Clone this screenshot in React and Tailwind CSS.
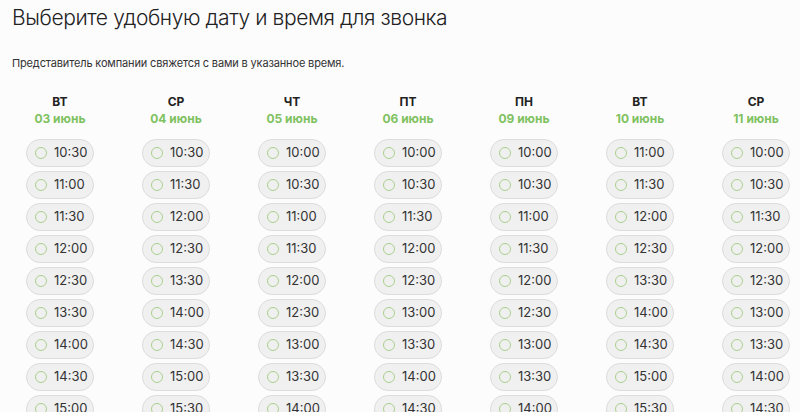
const days = [
  { day: 'ВТ', date: '03 июнь', times: ['10:30', '11:00', '11:30', '12:00', '12:30', '13:30', '14:00', '14:30', '15:00'] },
  { day: 'СР', date: '04 июнь', times: ['10:30', '11:30', '12:00', '12:30', '13:30', '14:00', '14:30', '15:00', '15:30'] },
  { day: 'ЧТ', date: '05 июнь', times: ['10:00', '10:30', '11:00', '11:30', '12:00', '12:30', '13:00', '13:30', '14:00'] },
  { day: 'ПТ', date: '06 июнь', times: ['10:00', '10:30', '11:30', '12:00', '12:30', '13:00', '13:30', '14:00', '14:30'] },
  { day: 'ПН', date: '09 июнь', times: ['10:00', '10:30', '11:00', '11:30', '12:00', '12:30', '13:00', '13:30', '14:00'] },
  { day: 'ВТ', date: '10 июнь', times: ['11:00', '11:30', '12:00', '12:30', '13:30', '14:00', '14:30', '15:00', '15:30'] },
  { day: 'СР', date: '11 июнь', times: ['10:00', '10:30', '11:30', '12:00', '12:30', '13:00', '13:30', '14:00', '14:30'] },
];

function Slot({ time }) {
  return (
    <button
      type="button"
      className="flex h-[28px] w-[68px] items-center gap-[7px] rounded-full border border-[#dcdcdc] bg-[#f0f0f0] pl-[8px] text-[13px] text-[#333]"
    >
      <span className="h-[12px] w-[12px] shrink-0 rounded-full border-[1.5px] border-[#a9d08f]" />
      {time}
    </button>
  );
}

export default function App() {
  return (
    <div className="h-[412px] w-[800px] overflow-hidden bg-[#fdfcfd] font-['Inter',sans-serif] text-[#222]">
      <h1 className="pl-[12px] pt-[3px] text-[21px] font-light leading-[30px] tracking-[-0.4px]">
        Выберите удобную дату и время для звонка
      </h1>
      <p className="mt-[22px] pl-[12px] text-[11px] leading-[16px] tracking-[-0.15px] text-[#333]">
        Представитель компании свяжется с вами в указанное время.
      </p>
      <div className="mt-[23px] flex gap-[48px] pl-[26px]">
        {days.map((d, i) => (
          <div key={i} className="flex w-[68px] shrink-0 flex-col items-center">
            <div className="text-[12px] font-bold leading-[16px] text-[#222]">{d.day}</div>
            <div className="mt-[1px] whitespace-nowrap text-[12px] font-bold leading-[16px] text-[#7fc25f]">{d.date}</div>
            <div className="mt-[12px] flex flex-col gap-[4px]">
              {d.times.map((t) => (
                <Slot key={t} time={t} />
              ))}
            </div>
          </div>
        ))}
      </div>
    </div>
  );
}
